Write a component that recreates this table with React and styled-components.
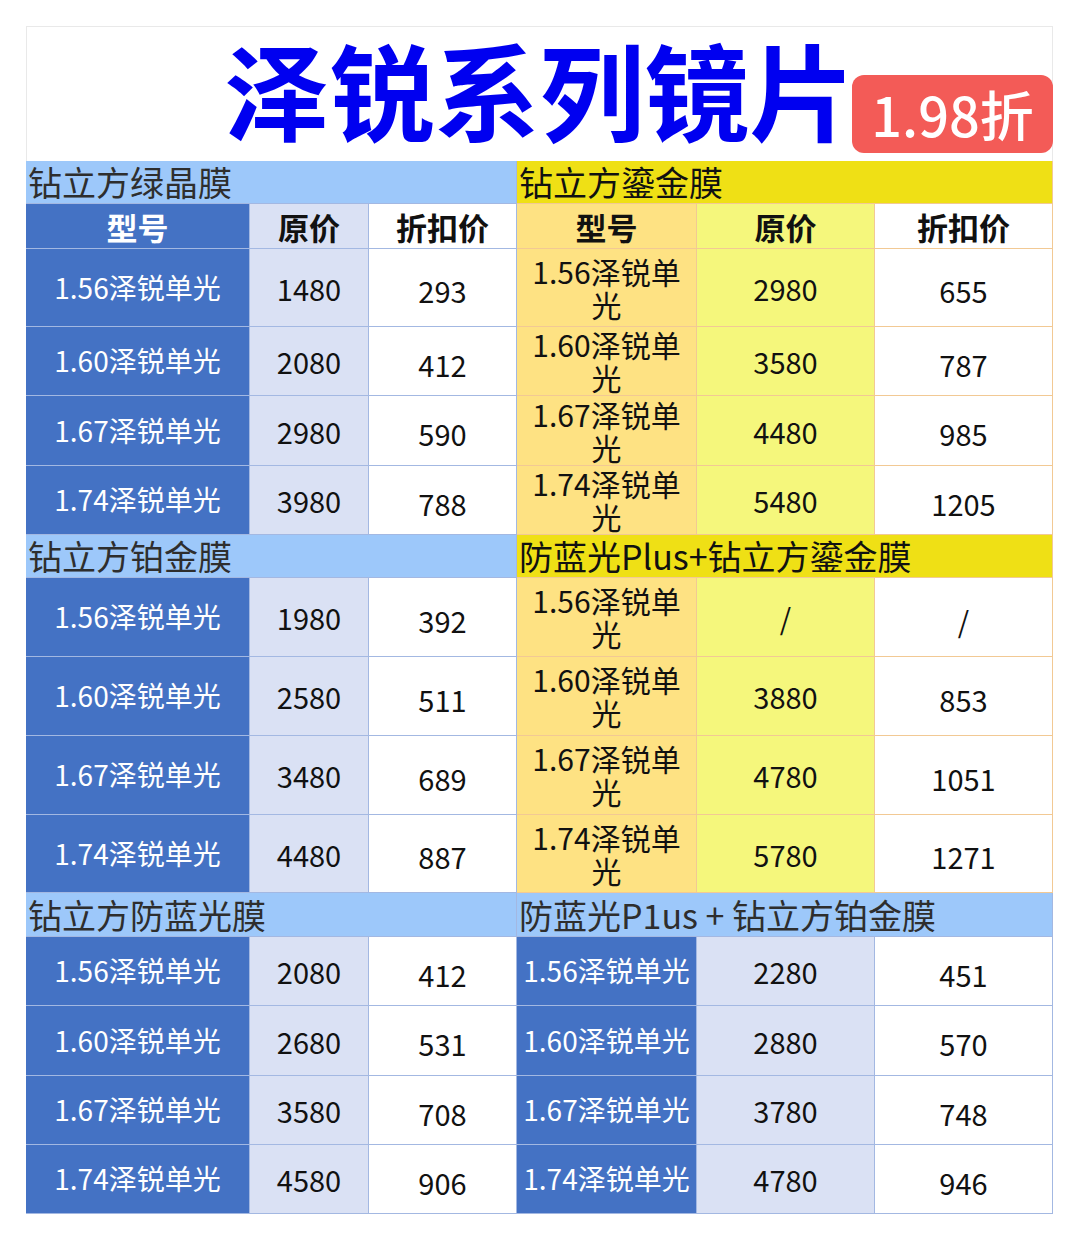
import React from "react";
import styled, { createGlobalStyle } from "styled-components";

const GlobalStyle = createGlobalStyle`
  body {
    margin: 0;
    background: #ffffff;
    font-family: "Noto Sans CJK SC", "Noto Sans", sans-serif;
  }
`;

const tones = {
  blue: {
    head: "#9dc8fa",
    headText: "#2e2e2e",
    model: "#4472c4",
    modelText: "#ffffff",
    price: "#dae1f4",
    line: "#a3b8e2",
  },
  yellow: {
    head: "#efe015",
    headText: "#111111",
    model: "#fee283",
    modelText: "#111111",
    price: "#f5f77c",
    line: "#f2c994",
  },
};

const models = ["1.56泽锐单光", "1.60泽锐单光", "1.67泽锐单光", "1.74泽锐单光"];

const sections = [
  {
    headH: 43,
    colHead: true,
    heights: [78, 69, 70, 69],
    left: { title: "钻立方绿晶膜", tone: "blue", prices: [["1480", "293"], ["2080", "412"], ["2980", "590"], ["3980", "788"]] },
    right: { title: "钻立方鎏金膜", tone: "yellow", wrap: true, prices: [["2980", "655"], ["3580", "787"], ["4480", "985"], ["5480", "1205"]] },
  },
  {
    headH: 43,
    heights: [79, 79, 79, 78],
    left: { title: "钻立方铂金膜", tone: "blue", prices: [["1980", "392"], ["2580", "511"], ["3480", "689"], ["4480", "887"]] },
    right: { title: "防蓝光Plus+钻立方鎏金膜", tone: "yellow", wrap: true, prices: [["/", "/"], ["3880", "853"], ["4780", "1051"], ["5780", "1271"]] },
  },
  {
    headH: 44,
    heights: [69, 70, 69, 69],
    left: { title: "钻立方防蓝光膜", tone: "blue", prices: [["2080", "412"], ["2680", "531"], ["3580", "708"], ["4580", "906"]] },
    right: { title: "防蓝光P1us + 钻立方铂金膜", tone: "blue", narrow: true, prices: [["2280", "451"], ["2880", "570"], ["3780", "748"], ["4780", "946"]] },
  },
];

function App() {
  return (
    <Page>
      <GlobalStyle />
      <Sheet>
        <TitleBar>
          <Title>泽锐系列镜片</Title>
          <Badge>1.98折</Badge>
        </TitleBar>
        <Grid>
          {sections.map((sec, si) => (
            <React.Fragment key={si}>
              <SectionHead $tone={sec.left.tone} $h={sec.headH}>{sec.left.title}</SectionHead>
              <SectionHead $tone={sec.right.tone} $h={sec.headH}>{sec.right.title}</SectionHead>
              {sec.colHead && (
                <>
                  <ColHead $bg={tones.blue.model} $color="#fff" $line={tones.blue.line}>型号</ColHead>
                  <ColHead $bg={tones.blue.price} $line={tones.blue.line}>原价</ColHead>
                  <ColHead $bg="#fff" $line={tones.blue.line}>折扣价</ColHead>
                  <ColHead $bg={tones.yellow.model} $line={tones.yellow.line}>型号</ColHead>
                  <ColHead $bg={tones.yellow.price} $line={tones.yellow.line}>原价</ColHead>
                  <ColHead $bg="#fff" $line={tones.yellow.line}>折扣价</ColHead>
                </>
              )}
              {models.map((m, i) => (
                <React.Fragment key={m}>
                  <ModelCell $tone="blue" $h={sec.heights[i]}>{m}</ModelCell>
                  <PriceCell $tone="blue">{sec.left.prices[i][0]}</PriceCell>
                  <DealCell $tone="blue">{sec.left.prices[i][1]}</DealCell>
                  <ModelCell
                    $tone={sec.right.tone}
                    $h={sec.heights[i]}
                    $wrap={sec.right.wrap}
                    $narrow={sec.right.narrow}
                  >
                    {m}
                  </ModelCell>
                  <PriceCell $tone={sec.right.tone}>{sec.right.prices[i][0]}</PriceCell>
                  <DealCell $tone={sec.right.tone}>{sec.right.prices[i][1]}</DealCell>
                </React.Fragment>
              ))}
            </React.Fragment>
          ))}
        </Grid>
      </Sheet>
    </Page>
  );
}

export default App;

const Page = styled.div`
  padding: 26px 0 27px 26px;
  background: #fff;
`;

const Sheet = styled.div`
  width: 1027px;
`;

const TitleBar = styled.div`
  position: relative;
  height: 135px;
  box-sizing: border-box;
  padding-bottom: 14px;
  border: 1px solid #e9e9e9;
  border-bottom: none;
  display: flex;
  align-items: center;
  justify-content: center;
`;

const Title = styled.h1`
  margin: 0;
  font-size: 105px;
  line-height: 1;
  font-weight: 700;
  color: #0000f0;
`;

const Badge = styled.div`
  position: absolute;
  right: -1px;
  bottom: 8px;
  width: 201px;
  height: 78px;
  border-radius: 12px;
  background: #f35b57;
  color: #fff;
  font-size: 54px;
  font-weight: 500;
  display: flex;
  align-items: center;
  justify-content: center;
  line-height: 1;
`;

const Grid = styled.div`
  display: grid;
  grid-template-columns: 224px 119px 148px 180px 178px 178px;
`;

const Cell = styled.div`
  box-sizing: border-box;
  display: flex;
  align-items: center;
  justify-content: center;
  text-align: center;
  border-right: 1px solid;
  border-bottom: 1px solid;
  color: #111;
`;

const SectionHead = styled(Cell)`
  grid-column: span 3;
  height: ${(p) => p.$h}px;
  justify-content: flex-start;
  padding-left: 2px;
  font-size: 34px;
  line-height: 1;
  white-space: nowrap;
  background: ${(p) => tones[p.$tone].head};
  color: ${(p) => tones[p.$tone].headText};
  border-color: ${(p) => tones[p.$tone].line};
`;

const ColHead = styled(Cell)`
  height: 45px;
  font-size: 31px;
  font-weight: 700;
  background: ${(p) => p.$bg};
  color: ${(p) => p.$color || "#111"};
  border-color: ${(p) => p.$line};
`;

const ModelCell = styled(Cell)`
  height: ${(p) => p.$h}px;
  background: ${(p) => tones[p.$tone].model};
  color: ${(p) => tones[p.$tone].modelText};
  border-color: ${(p) => tones[p.$tone].line};
  font-size: ${(p) => (p.$wrap ? 30 : 28)}px;
  line-height: ${(p) => (p.$wrap ? "33px" : "1.2")};
  padding: 0 ${(p) => (p.$wrap ? 8 : p.$narrow ? 2 : 6)}px;
  white-space: ${(p) => (p.$wrap ? "normal" : "nowrap")};
`;

const PriceCell = styled(Cell)`
  font-size: 29px;
  background: ${(p) => tones[p.$tone].price};
  border-color: ${(p) => tones[p.$tone].line};
`;

const DealCell = styled(Cell)`
  font-size: 29px;
  padding-top: 5px;
  background: #fff;
  border-color: ${(p) => tones[p.$tone].line};
`;
